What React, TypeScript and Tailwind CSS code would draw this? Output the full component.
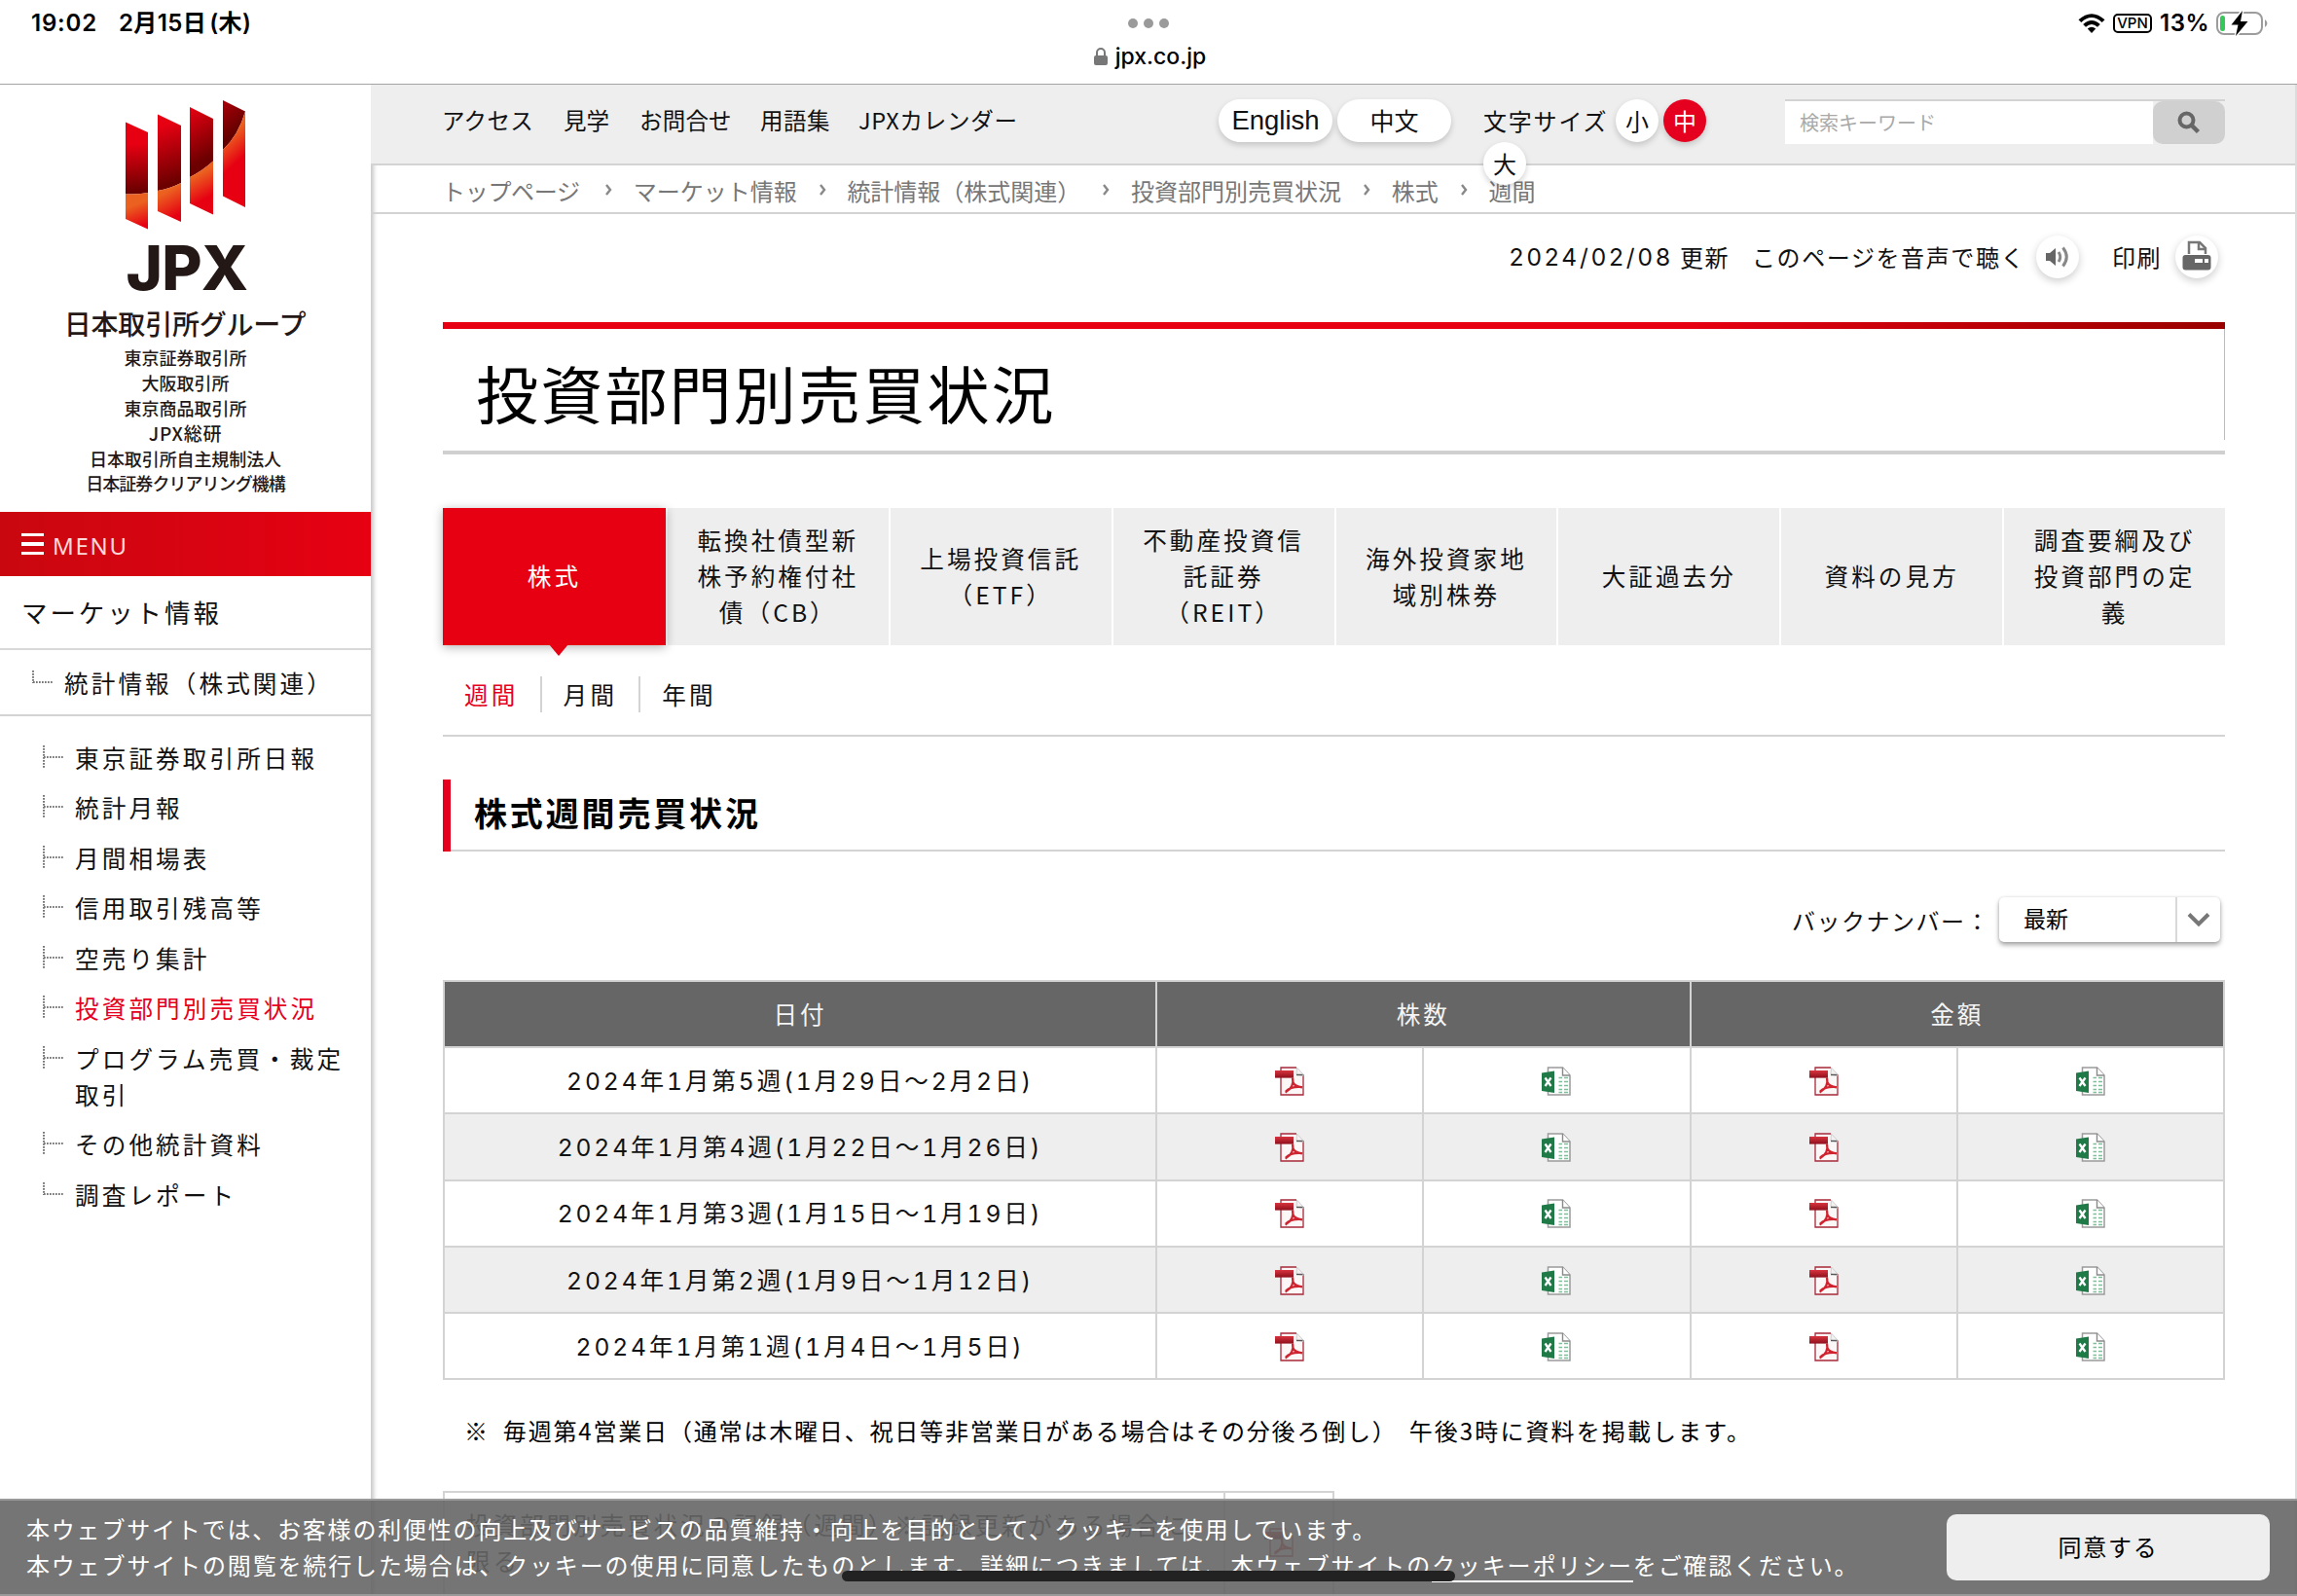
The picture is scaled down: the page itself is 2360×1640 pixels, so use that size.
import React from "react";

const mainNav = [
  { label: "アクセス", cls: "w-[125px] tracking-[0.300px]" },
  { label: "見学", cls: "w-[78px]" },
  { label: "お問合せ", cls: "w-[124px] tracking-[0.200px]" },
  { label: "用語集", cls: "w-[101px] tracking-[0.500px]" },
  { label: "JPXカレンダー", cls: "tracking-[0.750px]" },
];

const crumbs = ["トップページ", "マーケット情報", "統計情報（株式関連）", "投資部門別売買状況", "株式", "週間"];

const groupCompanies = [
  { name: "東京証券取引所", cls: "" },
  { name: "大阪取引所", cls: "" },
  { name: "東京商品取引所", cls: "" },
  { name: "JPX総研", cls: "text-[19px] tracking-[0.800px]" },
  { name: "日本取引所自主規制法人", cls: "tracking-[-0.100px]" },
  { name: "日本証券クリアリング機構", cls: "tracking-[-0.950px]" },
];

const sideItems: { lines: string[]; active?: boolean }[] = [
  { lines: ["東京証券取引所日報"] },
  { lines: ["統計月報"] },
  { lines: ["月間相場表"] },
  { lines: ["信用取引残高等"] },
  { lines: ["空売り集計"] },
  { lines: ["投資部門別売買状況"], active: true },
  { lines: ["プログラム売買・裁定", "取引"] },
  { lines: ["その他統計資料"] },
  { lines: ["調査レポート"] },
];

const tabs = [
  ["株式"],
  ["転換社債型新", "株予約権付社", "債（CB）"],
  ["上場投資信託", "（ETF）"],
  ["不動産投資信", "託証券", "（REIT）"],
  ["海外投資家地", "域別株券"],
  ["大証過去分"],
  ["資料の見方"],
  ["調査要綱及び", "投資部門の定", "義"],
];

const rows = [
  "2024年1月第5週(1月29日～2月2日)",
  "2024年1月第4週(1月22日～1月26日)",
  "2024年1月第3週(1月15日～1月19日)",
  "2024年1月第2週(1月9日～1月12日)",
  "2024年1月第1週(1月4日～1月5日)",
];

function PdfIcon() {
  return (
    <svg width="30" height="30" viewBox="0 0 30 30" className="block">
      <defs>
        <linearGradient id="pdfBand" x1="0" y1="0" x2="0" y2="1">
          <stop offset="0" stopColor="#d8343f" />
          <stop offset="1" stopColor="#8e0f1c" />
        </linearGradient>
      </defs>
      <path d="M6 1H22.500L29 8V29H6Z" fill="#fbf7f7" />
      <path d="M22 1H6V29H29V8" fill="none" stroke="#a8283a" strokeWidth="1.300" />
      <path d="M22.500 1L29 8V9.500L22 8Z" fill="#f1f1f1" stroke="#c9c3c5" strokeWidth=".8" />
      <path d="M22 8.500H28.500" stroke="#555" strokeWidth="1.400" />
      <rect x="0" y="4" width="19" height="7.600" fill="url(#pdfBand)" />
      <path
        d="M18 11.500C18.600 14.500 18.800 17 17.200 20C15.500 23.200 13.500 25 10.600 26.600M18.400 16C19.500 19 21.500 20.600 28 21.400M11 25.500C15 21.500 20 20.200 28 21"
        fill="none"
        stroke="#cf2430"
        strokeWidth="2.200"
      />
    </svg>
  );
}

function ExcelIcon() {
  return (
    <svg width="30" height="30" viewBox="0 0 30 30" className="block">
      <path d="M6.500 1H21.500L29 9V29H6.500Z" fill="#fff" stroke="#9a9a9a" strokeWidth="1.500" />
      <path d="M21.500 1V9H29" fill="#fff" stroke="#8a8a8a" strokeWidth="1.400" />
      <path
        d="M17.500 11.500H21M23 11.500H27M17.500 15.500H21M23 15.500H27M17.500 19.500H21M23 19.500H27M17.500 23.500H21M23 23.500H27M17.500 26.500H21M23 26.500H27"
        stroke="#7cc09a"
        strokeWidth="1.700"
      />
      <path d="M0 6.500L13 4.500V27L0 25Z" fill="#1f7a47" />
      <path d="M3.500 11.500L9.500 20M9.500 11.500L3.500 20" stroke="#fff" strokeWidth="2.300" />
    </svg>
  );
}

function Leader({ last }: { last?: boolean }) {
  return (
    <svg width="22" height="24" viewBox="0 0 22 24" className="block shrink-0">
      <path
        d={last ? "M1 0V13M1 12H21" : "M1 0V24M1 12H21"}
        fill="none"
        stroke="#777"
        strokeWidth="2"
        strokeDasharray="1.700 1.300"
      />
    </svg>
  );
}

function Logo() {
  return (
    <svg width="124" height="133" viewBox="130 103 124 133" className="block">
      <defs>
        <linearGradient id="dark1" gradientUnits="userSpaceOnUse" x1="142" y1="148" x2="145" y2="196">
          <stop offset="0" stopColor="#e60012" />
          <stop offset="1" stopColor="#6c0000" />
        </linearGradient>
        <linearGradient id="dark2" gradientUnits="userSpaceOnUse" x1="166" y1="130" x2="184" y2="186">
          <stop offset="0" stopColor="#e60012" />
          <stop offset="1" stopColor="#6c0000" />
        </linearGradient>
        <linearGradient id="dark3" gradientUnits="userSpaceOnUse" x1="196" y1="112" x2="222" y2="158">
          <stop offset="0" stopColor="#e60012" />
          <stop offset="1" stopColor="#6c0000" />
        </linearGradient>
        <linearGradient id="dark4" gradientUnits="userSpaceOnUse" x1="230" y1="105" x2="250" y2="130">
          <stop offset="0" stopColor="#a80008" />
          <stop offset="1" stopColor="#640000" />
        </linearGradient>
        <linearGradient id="light1" gradientUnits="userSpaceOnUse" x1="138" y1="205" x2="148" y2="232">
          <stop offset="0.200" stopColor="#eb6120" />
          <stop offset="1" stopColor="#e60012" />
        </linearGradient>
        <linearGradient id="light2" gradientUnits="userSpaceOnUse" x1="168" y1="196" x2="182" y2="222">
          <stop offset="0.100" stopColor="#eb6120" />
          <stop offset="1" stopColor="#e60012" />
        </linearGradient>
        <linearGradient id="light3" gradientUnits="userSpaceOnUse" x1="200" y1="180" x2="213" y2="204">
          <stop offset="0.050" stopColor="#eb6120" />
          <stop offset="1" stopColor="#e60012" />
        </linearGradient>
        <linearGradient id="light4" gradientUnits="userSpaceOnUse" x1="234" y1="142" x2="251" y2="161">
          <stop offset="0" stopColor="#eb6120" />
          <stop offset="1" stopColor="#e60012" />
        </linearGradient>
      </defs>
      <path d="M130 125.500L153 136V198Q142 200 130 199.500Z" fill="url(#dark1)" />
      <path d="M130 199.500Q142 200 153 198V235.500L130 225Z" fill="url(#light1)" />
      <path d="M163 117.500L187 129V188Q175 194 163 196Z" fill="url(#dark2)" />
      <path d="M163 196Q175 194 187 188V228L163 217Z" fill="url(#light2)" />
      <path d="M196 110L220 122V165.500Q209 175.500 196 182Z" fill="url(#dark3)" />
      <path d="M196 182Q209 175.500 220 165.500V220.500L196 209Z" fill="url(#light3)" />
      <path d="M230 103L253 114.500Q246 139 230 154Z" fill="url(#dark4)" />
      <path d="M230 154Q246 139 253 114.500V213L230 201.500Z" fill="url(#light4)" />
    </svg>
  );
}

function StatusBar() {
  return (
    <header className="relative z-20 flex h-[87px] shrink-0 border-b border-[#a4a4a4] bg-white text-black">
      <div className="flex h-12 w-[1080px] items-center pl-8 text-2xl font-semibold tracking-[0.800px]">
        <span className="w-[90px]">19:02</span>
        <span className="tracking-[0.400px]">
          2月15日<span className="ml-[3px]">(木)</span>
        </span>
      </div>
      <div className="flex w-[200px] flex-col items-center">
        <div className="flex h-12 items-center gap-[6px]">
          <i className="size-[10px] rounded-full bg-[#9a9a9a]" />
          <i className="size-[10px] rounded-full bg-[#9a9a9a]" />
          <i className="size-[10px] rounded-full bg-[#9a9a9a]" />
        </div>
        <div className="flex h-5 items-center gap-2 pl-[3px] text-[23px] font-medium">
          <svg width="14" height="20" viewBox="0 0 14 20">
            <rect x="0" y="9" width="14" height="10" rx="2" fill="#777" />
            <path d="M3 10V6a4 4 0 0 1 8 0V10" fill="none" stroke="#777" strokeWidth="2" />
          </svg>
          <span>jpx.co.jp</span>
        </div>
      </div>
      <div className="flex h-12 w-[1080px] items-center justify-end pr-[29px]">
        <svg width="28" height="20" viewBox="0 0 28 20" className="mr-2">
          <path d="M0.500 6.300Q14 -6 27.500 6.300L24.700 9Q14 -0.800 3.300 9Z" />
          <path d="M5.200 11Q14 3 22.800 11L20 13.800Q14 8.300 8 13.800Z" />
          <path d="M9.800 15.600Q14 12 18.200 15.600L14 20Z" />
        </svg>
        <span className="mr-[8px] flex h-5 w-10 items-center justify-center rounded-[5px] border-2 border-black text-[15px] font-medium">VPN</span>
        <span className="mr-[5px] w-[53px] text-2xl font-semibold tracking-[0.500px]">13%</span>
        <svg width="54" height="26" viewBox="0 0 54 26">
          <rect x="1" y="2" width="46" height="22" rx="7" fill="none" stroke="#9c9c9c" strokeWidth="2" />
          <path d="M50 9Q55 13 50 17Z" fill="#9c9c9c" />
          <rect x="4" y="5" width="5" height="16" rx="2.500" fill="#34c759" />
          <path d="M27 0L15.500 14.500H22.500L20 26L32.500 11H25Z" fill="#000" stroke="#fff" strokeWidth="3" paintOrder="stroke" />
        </svg>
      </div>
    </header>
  );
}

function Sidebar() {
  return (
    <aside className="flex w-[381px] shrink-0 flex-col bg-white text-[#111]">
      <div className="flex h-[439px] flex-col items-center pt-[16px] text-[#231815]">
        <Logo />
        <div className="mt-[6px] h-[66px] pl-[3px] font-[Inter] text-[63.500px] leading-[66px] font-extrabold tracking-[-0.800px]">JPX</div>
        <div className="mt-[8px] h-[32px] pr-px text-[28px] leading-[32px] font-medium tracking-[-0.200px]">日本取引所グループ</div>
        <div className="mt-[6.500px] flex flex-col items-center text-[18px] font-medium">
          {groupCompanies.map((c) => (
            <span key={c.name} className={`flex h-[25.900px] items-center ${c.cls}`}>
              {c.name}
            </span>
          ))}
        </div>
      </div>
      <div className="flex h-[66px] items-center bg-linear-to-r from-[#c9070f] to-[#e60012] pl-[22px]">
        <div className="flex flex-col gap-[6px]">
          <i className="h-[3.500px] w-[23px] bg-white" />
          <i className="h-[3.500px] w-[23px] bg-white" />
          <i className="h-[3.500px] w-[23px] bg-white" />
        </div>
        <span className="ml-[9px] pt-[3px] font-['Noto_Sans'] text-2xl tracking-[1.700px] text-[#ffd9d9]">MENU</span>
      </div>
      <div className="flex h-[76px] items-center border-b-2 border-[#d9d9d9] pl-[22px] text-[26.500px] tracking-[2.900px]">マーケット情報</div>
      <div className="flex h-[68px] items-center border-b-2 border-[#d3d3d3] pl-[33px] text-[24.600px] tracking-[3.100px]">
        <Leader last />
        <span className="ml-[11px]">統計情報（株式関連）</span>
      </div>
      <ul className="flex flex-col gap-[14.800px] pt-[23.500px] pl-11 text-[24.600px] leading-[36.800px] tracking-[3.100px]">
        {sideItems.map((it, i) => (
          <li key={i} className="flex items-start">
            <span className="mt-[6px]">
              <Leader last={i === sideItems.length - 1} />
            </span>
            <span className={it.active ? "ml-[11px] text-[#e60020]" : "ml-[11px]"}>
              {it.lines.map((l) => (
                <span key={l} className="block whitespace-nowrap">
                  {l}
                </span>
              ))}
            </span>
          </li>
        ))}
      </ul>
    </aside>
  );
}

function TopNav() {
  const round = "flex size-11 items-center justify-center rounded-full shadow-[0_3px_6px_rgba(0,0,0,0.18)]";
  return (
    <div className="relative z-10 flex h-[83px] items-start border-b-2 border-[#d3d3d3] bg-[#eee] pt-[15px] pl-[73px] text-[#111]">
      <nav className="flex h-[44px] w-[798px] items-center text-[23.500px]">
        {mainNav.map((n) => (
          <span key={n.label} className={n.cls}>
            {n.label}
          </span>
        ))}
      </nav>
      <span className="flex h-11 w-[117px] items-center justify-center rounded-full bg-white font-['Liberation_Sans'] text-[27.500px] shadow-[0_3px_6px_rgba(0,0,0,0.18)]">English</span>
      <span className="ml-[5px] flex h-11 w-[117px] items-center justify-center rounded-full bg-white text-[25px] shadow-[0_3px_6px_rgba(0,0,0,0.18)]">中文</span>
      <div className="ml-[33px] flex w-[310px] flex-col text-2xl">
        <div className="flex items-center">
          <span className="w-[136px] tracking-[1.800px]">文字サイズ</span>
          <span className={`${round} bg-white`}>小</span>
          <span className={`${round} ml-[5px] bg-[#e60020] text-white`}>中</span>
        </div>
        <span className={`${round} bg-white`}>大</span>
      </div>
      <div className="flex h-[46px] w-[452px] border-t-2 border-[#d3d3d3]">
        <span className="flex w-[378px] items-center bg-white pl-[15px] text-[20px] text-[#a9a9a9]">検索キーワード</span>
        <span className="flex w-[74px] items-center justify-center rounded-[10px] bg-[#d0d0d0]">
          <svg width="24" height="24" viewBox="0 0 24 24">
            <circle cx="9.500" cy="9.500" r="7" fill="none" stroke="#666" strokeWidth="4" />
            <path d="M14.500 14.500L21.500 21.500" stroke="#666" strokeWidth="4.500" />
          </svg>
        </span>
      </div>
    </div>
  );
}

function Breadcrumbs() {
  return (
    <div className="flex h-[50px] items-center border-b-2 border-[#d3d3d3] pt-[3px] pl-[73px] text-2xl text-[#777]">
      {crumbs.map((c, i) => (
        <React.Fragment key={c}>
          {i > 0 && (
            <span className="flex w-[51.700px] justify-center pb-[2px]">
              <svg width="8" height="12" viewBox="0 0 8 12">
                <path d="M2 1L6 6L2 11" fill="none" stroke="#888" strokeWidth="2.400" />
              </svg>
            </span>
          )}
          <span className={i === 0 ? "w-[145px] tracking-[-0.300px]" : ""}>{c}</span>
        </React.Fragment>
      ))}
    </div>
  );
}

function MetaRow() {
  const round = "flex size-11 items-center justify-center rounded-full bg-white shadow-[0_3px_8px_rgba(0,0,0,0.2)]";
  return (
    <div className="mt-[22px] flex h-[44px] items-center justify-end pr-[7px] text-2xl tracking-[1.600px]">
      <span className="flex w-[200px] justify-end pt-px font-[Inter] text-[24.500px] tracking-[2.900px]">2024/02/08</span>
      <span className="ml-[7px] w-[74px]">更新</span>
      <span className="w-[292px]">このページを音声で聴く</span>
      <span className={round}>
        <svg width="26" height="24" viewBox="0 0 26 24">
          <path d="M1 8H5L11 3V21L5 16H1Z" fill="#666" />
          <path d="M14 7Q17.500 12 14 17" fill="none" stroke="#888" strokeWidth="3" />
          <path d="M18.500 2.500Q26 12 18.500 21.500" fill="none" stroke="#888" strokeWidth="3" />
        </svg>
      </span>
      <span className="ml-[34px] w-[65px]">印刷</span>
      <span className={round}>
        <svg width="30" height="31" viewBox="0 0 30 31" className="mb-1">
          <path d="M7 14V2H18L24 8V14" fill="none" stroke="#777" strokeWidth="2.500" />
          <path d="M17 2V9H24" fill="none" stroke="#777" strokeWidth="2.500" />
          <rect x="0.500" y="15" width="29" height="15.500" rx="3" fill="#666" />
          <rect x="13" y="19" width="8" height="4" fill="#fff" />
          <rect x="23" y="19" width="4" height="4" fill="#fff" />
        </svg>
      </span>
    </div>
  );
}

function Tabs() {
  return (
    <div className="mt-[55px] grid h-[141px] grid-cols-8 text-center text-[24.600px] leading-[36.700px] tracking-[3.050px]">
      {tabs.map((lines, i) => (
        <div
          key={lines[0]}
          className={
            i === 0
              ? "relative flex flex-col items-center justify-center bg-[#e60012] pb-[2px] text-white shadow-[0_2px_10px_rgba(0,0,0,0.3)]"
              : "flex flex-col items-center justify-center border-l-2 border-white bg-[#eee] pb-[2px]"
          }
        >
          {lines.map((l) => (
            <span key={l} className="whitespace-nowrap">
              {l}
            </span>
          ))}
          {i === 0 && (
            <svg width="20" height="12" viewBox="0 0 20 12" className="absolute top-[140px] left-[109px]">
              <path d="M0 0H20L10 12Z" fill="#e60012" />
            </svg>
          )}
        </div>
      ))}
    </div>
  );
}

function DataTable() {
  const cell = "flex items-center justify-center border-r-2 border-b-2 border-[#d3d3d3]";
  return (
    <div className="mt-[39px] flex flex-col border-t-2 border-l-2 border-[#d3d3d3] text-[24.600px] tracking-[2.900px]">
      <div className="grid h-[68px] grid-cols-[732px_548.500px_548.500px] bg-[#666] text-[#f4f4f4]">
        <span className={`${cell} pb-[2px]`}>日付</span>
        <span className={`${cell} pb-[2px]`}>株数</span>
        <span className={`${cell} pb-[2px]`}>金額</span>
      </div>
      {rows.map((r, i) => (
        <div
          key={r}
          className={
            i % 2
              ? "grid h-[68.300px] grid-cols-[732px_274px_274.500px_274.500px_274px] bg-[#eee]"
              : "grid h-[68.300px] grid-cols-[732px_274px_274.500px_274.500px_274px]"
          }
        >
          <span className={`${cell} pt-[2px] font-[Inter,'Noto_Sans_CJK_JP',sans-serif] tracking-[2.900px] tabular-nums`}>{r}</span>
          <span className={`${cell} pt-px`}><PdfIcon /></span>
          <span className={`${cell} pt-px`}><ExcelIcon /></span>
          <span className={`${cell} pt-px`}><PdfIcon /></span>
          <span className={`${cell} pt-px`}><ExcelIcon /></span>
        </div>
      ))}
    </div>
  );
}

function CookieBar() {
  return (
    <div className="absolute bottom-0 left-0 z-30 flex h-[100px] w-full justify-between border-y-2 border-[#999] bg-[rgba(102,102,102,0.9)] pt-[12px] pr-[28px] pl-[27px]">
      <div className="text-2xl leading-[37px] tracking-[1.850px] whitespace-nowrap text-white">
        <p className="tracking-[1.800px]">本ウェブサイトでは、お客様の利便性の向上及びサービスの品質維持・向上を目的として、クッキーを使用しています。</p>
        <p>
          本ウェブサイトの閲覧を続行した場合は、クッキーの使用に同意したものとします。詳細につきましては、本ウェブサイトの
          <span className="border-b-2 border-white">クッキーポリシー</span>
          をご確認ください。
        </p>
      </div>
      <span className="mt-[2px] flex h-[68px] w-[332px] items-center justify-center rounded-[10px] bg-[#eee] pt-[2px] text-2xl tracking-[1.700px] text-black">同意する</span>
      <i className="absolute top-[72px] left-[865px] h-[11px] w-[630px] rounded-full bg-[#222]" />
    </div>
  );
}

export default function App() {
  return (
    <div className="relative flex h-[1640px] w-[2360px] flex-col overflow-hidden bg-white font-[Inter,'Noto_Sans_CJK_JP',sans-serif] whitespace-nowrap">
      <StatusBar />
      <div className="flex flex-1 font-['Noto_Sans_CJK_JP',sans-serif]">
        <Sidebar />
        <main className="w-[1979px] border-r-2 border-[#dcdcdc] bg-white shadow-[inset_5px_0_4px_-2px_rgba(0,0,0,0.22)]">
          <TopNav />
          <Breadcrumbs />
          <div className="pr-[72px] pl-[74px] text-[#111]">
            <MetaRow />
            <div className="mt-[45px] h-[7px] bg-linear-to-r from-[#e60012] from-70% to-[#990000]" />
            <div className="h-[129px] border-b-4 border-[#d0d0d0]">
              <h1 className="flex h-[114px] items-center border-r border-[#e8a8ac] pt-[14px] pl-[34px] text-[64px] tracking-[2.200px] text-black">投資部門別売買状況</h1>
            </div>
            <Tabs />
            <div className="flex h-[94px] items-center border-b-2 border-[#d3d3d3] pt-[8px] pl-[22px] text-[24.600px] tracking-[3.200px]">
              <span className="text-[#e60020]">週間</span>
              <span className="ml-[22px] h-[37px] w-[2px] bg-[#d3d3d3]" />
              <span className="ml-[22px]">月間</span>
              <span className="ml-[22px] h-[37px] w-[2px] bg-[#d3d3d3]" />
              <span className="ml-[22px]">年間</span>
            </div>
            <div className="mt-11 flex h-[74px] items-stretch">
              <i className="w-2 bg-[#e60020]" />
              <h2 className="flex flex-1 items-center border-b-2 border-[#d3d3d3] pb-[5px] pl-6 text-[34px] font-bold tracking-[2.850px] text-black">株式週間売買状況</h2>
            </div>
            <div className="mt-[47px] flex h-[46px] items-center justify-end pr-[5px] text-2xl">
              <span className="mt-[2px] w-[213px] tracking-[1.500px]">バックナンバー：</span>
              <span className="flex h-[46px] w-[227px] items-center rounded-[5px] bg-white text-[23px] text-black shadow-[0_3px_5px_rgba(0,0,0,0.35),0_0_3px_rgba(0,0,0,0.12)]">
                <span className="flex h-full w-[183px] items-center border-r-2 border-[#d9d9d9] pb-[3px] pl-[25px]">最新</span>
                <svg width="24" height="16" viewBox="0 0 24 16" className="ml-[10px]">
                  <path d="M2 2.500L12 12.500L22 2.500" fill="none" stroke="#777" strokeWidth="4" />
                </svg>
              </span>
            </div>
            <DataTable />
            <p className="mt-[34px] pl-[22px] text-2xl leading-9 tracking-[1.820px] text-black">
              ※<span className="ml-[14px]">毎週第4営業日（通常は木曜日、祝日等非営業日がある場合はその分後ろ倒し）</span>
              <span className="ml-[12px] tracking-[2.100px]">午後3時に資料を掲載します。</span>
            </p>
            <div className="mt-[44px] flex h-[120px] w-[916px] border-2 border-[#d3d3d3] text-[24.600px] leading-[36.700px] tracking-[2.900px]">
              <div className="w-[802px] border-r-2 border-[#d3d3d3] pt-[14px] pl-[22px]">
                投資部門別売買状況の記録（週間）※記録更新がある場合に
                <br />
                限る
              </div>
              <div className="flex flex-1 justify-center pt-9">
                <PdfIcon />
              </div>
            </div>
          </div>
        </main>
      </div>
      <CookieBar />
    </div>
  );
}
